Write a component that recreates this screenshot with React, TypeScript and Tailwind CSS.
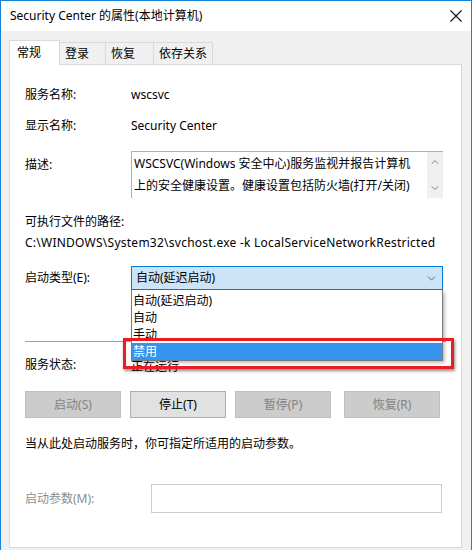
import { ChevronDown, ChevronUp } from "lucide-react";

const font = { fontFamily: '"Noto Sans", "Noto Sans CJK SC", sans-serif' };

function Label(props: { children: React.ReactNode; muted?: boolean }) {
  return (
    <div
      className={`w-[106px] shrink-0 ${props.muted ? "text-[#8d8d8d]" : ""}`}
    >
      {props.children}
    </div>
  );
}

function SvcButton(props: { label: string; enabled?: boolean; className?: string }) {
  return (
    <div
      className={`flex h-[27px] w-[96px] items-center justify-center border ${
        props.enabled
          ? "border-[#adadad] bg-[#e1e1e1] text-black"
          : "border-[#bfbfbf] bg-[#cccccc] text-[#838383]"
      } ${props.className ?? ""}`}
    >
      {props.label}
    </div>
  );
}

export default function App() {
  const tabs = [
    { name: "登录", w: "w-[46px]" },
    { name: "恢复", w: "w-[48px]" },
    { name: "依存关系", w: "w-[59px]" },
  ];
  const options = ["自动(延迟启动)", "自动", "手动"];

  return (
    <div
      className="relative flex h-[550px] w-[472px] flex-col overflow-hidden border-x border-t border-[#1883d7] bg-[#f0f0f0] text-[12px] leading-[16px] text-black"
      style={font}
    >
      {/* title bar */}
      <div className="flex h-[30px] shrink-0 items-center justify-between bg-white pl-[9px] pr-[8px]">
        <span>Security Center 的属性(本地计算机)</span>
        <svg width="12" height="12" viewBox="0 0 12 12" className="mr-[1px]">
          <path d="M0.5 0.5 L11.5 11.5 M11.5 0.5 L0.5 11.5" stroke="#111" strokeWidth="1.1" />
        </svg>
      </div>

      {/* tabs */}
      <div className="mt-[9px] flex h-[24px] items-end pl-[8px]">
        <div className="relative z-10 -mb-px flex h-[25px] w-[51px] items-start border-x border-t border-[#d9d9d9] bg-white pl-[7px] pt-[4px]">
          常规
        </div>
        {tabs.map((t) => (
          <div
            key={t.name}
            className={`flex h-[22px] ${t.w} items-start border-r border-t border-[#d9d9d9] bg-[#f0f0f0] pl-[5px] pt-[3px]`}
          >
            {t.name}
          </div>
        ))}
      </div>

      {/* panel */}
      <div className="ml-[8px] flex h-[484px] w-[453px] flex-col border border-[#d9d9d9] bg-white px-[15px]">
        <div className="mt-[22px] flex">
          <Label>服务名称:</Label>
          <span>wscsvc</span>
        </div>
        <div className="mt-[15px] flex">
          <Label>显示名称:</Label>
          <span>Security Center</span>
        </div>
        <div className="mt-[17px] flex items-start">
          <div className="pt-[6px]">
            <Label>描述:</Label>
          </div>
          <div className="flex h-[47px] w-[312px] border border-[#b0b0b0] border-r-0 border-b-0">
            <div className="flex-1 pl-[2px] pr-[10px] pt-[1px] leading-[22px]">
              WSCSVC(Windows 安全中心)服务监视并报告计算机上的安全健康设置。健康设置包括防火墙(打开/关闭)
            </div>
            <div className="flex w-[16px] flex-col items-center justify-between bg-[#f0f0f0] py-[4px] text-[#606060]">
              <ChevronUp size={12} strokeWidth={1.5} />
              <ChevronDown size={12} strokeWidth={1.5} />
            </div>
          </div>
        </div>
        <div className="mt-[16px]">可执行文件的路径:</div>
        <div className="mt-[5px] tracking-[0.25px]">
          C:\WINDOWS\System32\svchost.exe -k LocalServiceNetworkRestricted
        </div>

        <div className="mt-[15px] flex items-center">
          <Label>启动类型(E):</Label>
          <div className="relative z-10 w-[312px]">
            <div className="flex h-[24px] items-center justify-between border border-[#0078d7] bg-[#cce4f7] pl-[4px] pr-[4px]">
              <span>自动(延迟启动)</span>
              <ChevronDown size={13} strokeWidth={1.3} className="text-[#333]" />
            </div>
            <div className="absolute left-0 top-full flex w-full flex-col border border-t-0 border-[#7a7a7a] bg-white pt-[2px] shadow-[2px_2px_3px_rgba(0,0,0,0.25)]">
              {options.map((o) => (
                <div key={o} className="h-[17px] pl-[1px] leading-[17px]">
                  {o}
                </div>
              ))}
              <div className="h-[17px] bg-[#3494ef] pl-[1px] leading-[17px] text-white">禁用</div>
            </div>
          </div>
        </div>

        <div className="mt-[51px] h-px bg-[#a0a0a0]" />

        <div className="mt-[15px] flex">
          <Label>服务状态:</Label>
          <span className="pt-[2px]">正在运行</span>
        </div>

        <div className="mt-[16px] flex">
          <SvcButton label="启动(S)" />
          <SvcButton label="停止(T)" enabled className="ml-[9px]" />
          <SvcButton label="暂停(P)" className="ml-[9px]" />
          <SvcButton label="恢复(R)" className="ml-[13px]" />
        </div>

        <div className="mt-[18px]">当从此处启动服务时，你可指定所适用的启动参数。</div>

        <div className="mt-[32px] flex items-center">
          <div className="w-[126px] shrink-0 text-[#8d8d8d]">启动参数(M):</div>
          <div className="h-[29px] w-[291px] border border-[#cccccc] bg-white" />
        </div>
      </div>

      {/* red highlight around the chosen option */}
      <div className="pointer-events-none absolute left-[122px] top-[337px] z-20 h-[31px] w-[331px] border-[3px] border-[#ec1c24] shadow-[1px_2px_3px_rgba(0,0,0,0.45)]" />
    </div>
  );
}
